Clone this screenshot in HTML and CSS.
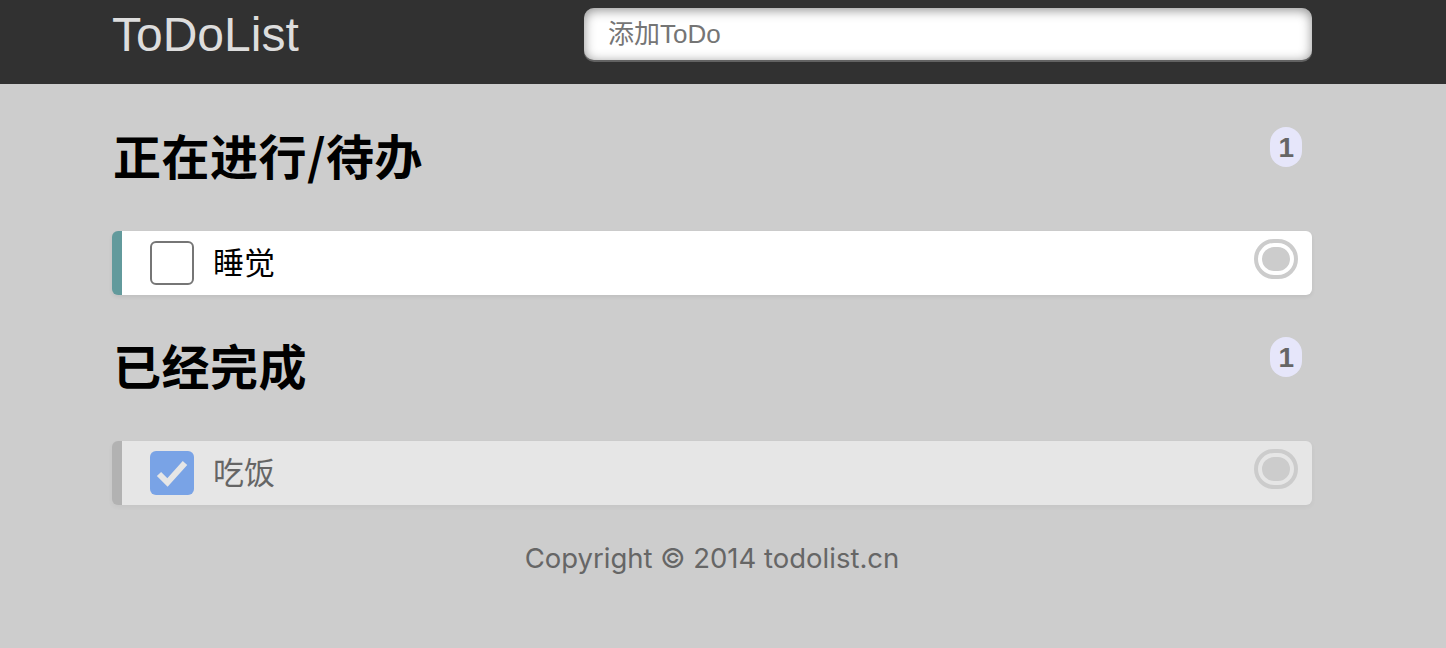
FILE: index.html
```html
<!DOCTYPE html>
<html lang="zh-CN">
<head>
<meta charset="utf-8">
<title>ToDoList</title>
<link rel="stylesheet" href="styles.css">
</head>
<body>
<header class="topbar">
  <div class="topbar-inner">
    <div class="brand">ToDoList</div>
    <input class="new-todo" type="text" placeholder="添加ToDo">
  </div>
</header>
<main class="content">
  <div class="group-head">
    <h2 class="group-title">正在进行/待办</h2>
    <span class="count">1</span>
  </div>
  <ol class="todo-list">
    <li class="todo">
      <span class="check"></span>
      <span class="todo-text">睡觉</span>
      <span class="remove"></span>
    </li>
  </ol>
  <div class="group-head">
    <h2 class="group-title">已经完成</h2>
    <span class="count">1</span>
  </div>
  <ul class="todo-list">
    <li class="todo done">
      <span class="check checked"><svg viewBox="0 0 44 44" width="44" height="44"><polyline points="9,23 17.5,31.5 35,12" fill="none" stroke="#fff" stroke-width="6"/></svg></span>
      <span class="todo-text">吃饭</span>
      <span class="remove"></span>
    </li>
  </ul>
  <footer class="footer">Copyright © 2014 todolist.cn</footer>
</main>
</body>
</html>
```

FILE: styles.css
```css
html, body {
  margin: 0;
  padding: 0;
}
body {
  background: #cdcdcd;
  font-family: "Liberation Sans", "Noto Sans CJK SC", sans-serif;
}
.topbar {
  height: 84px;
  background: #313131;
}
.topbar-inner {
  width: 1200px;
  margin-left: 112px;
  display: flex;
  justify-content: space-between;
  align-items: flex-start;
}
.brand {
  font-size: 48px;
  line-height: 70px;
  color: #dddddd;
}
.new-todo {
  box-sizing: border-box;
  width: 728px;
  height: 52px;
  margin-top: 8px;
  padding: 0 0 0 24px;
  border: none;
  border-radius: 10px;
  background: #fff;
  font-family: "Liberation Sans", "Noto Sans CJK SC", sans-serif;
  font-size: 26px;
  color: #333;
  box-shadow: 0 2px 0 rgba(255,255,255,0.24), inset 0 2px 12px rgba(0,0,0,0.45);
  outline: none;
}
.new-todo::placeholder {
  color: #757575;
}
.content {
  width: 1200px;
  margin-left: 112px;
  padding-top: 46px;
}
.group-head {
  display: flex;
  justify-content: space-between;
  align-items: flex-start;
  margin-bottom: 45px;
}
.group-title {
  margin: 0;
  padding-left: 1px;
  height: 56px;
  line-height: 48px;
  font-size: 48px;
  letter-spacing: 0.5px;
  font-weight: bold;
  color: #000;
  font-family: "Noto Sans CJK SC", "Liberation Sans", sans-serif;
}
.count {
  margin-top: -3px;
  margin-right: 10px;
  height: 40px;
  line-height: 42px;
  padding: 0 8px;
  min-width: 14px;
  text-align: center;
  border-radius: 20px;
  background: #e6e6fa;
  color: #666;
  font-size: 28px;
  font-weight: bold;
}
.todo-list {
  list-style: none;
  margin: 0 0 45px 0;
  padding: 0;
}
.todo {
  display: flex;
  align-items: center;
  height: 64px;
  padding-left: 28px;
  padding-right: 10px;
  background: #fff;
  border-left: 10px solid #629a9c;
  border-radius: 6px;
  box-shadow: 0 2px 4px rgba(0,0,0,0.07);
}
.todo.done {
  border-left-color: #999;
  opacity: 0.5;
}
.check {
  box-sizing: border-box;
  width: 44px;
  height: 44px;
  border: 2px solid #767676;
  border-radius: 6px;
  background: #fff;
  flex: none;
}
.check.checked {
  border: none;
  background: #287bff;
}
.check svg {
  display: block;
}
.todo-text {
  margin-left: 19px;
  padding-bottom: 5px;
  font-size: 31px;
  color: #000;
  font-family: "Noto Sans CJK SC", "Liberation Sans", sans-serif;
}
.remove {
  margin-left: auto;
  align-self: flex-start;
  margin-top: 4px;
  width: 28px;
  height: 24px;
  border: 12px double #fff;
  border-radius: 28px;
  background: #ccc;
  flex: none;
}
.footer {
  margin-top: -12px;
  line-height: 40px;
  text-align: center;
  font-family: "Inter", "Liberation Sans", sans-serif;
  font-size: 27.5px;
  color: #666;
}
```
